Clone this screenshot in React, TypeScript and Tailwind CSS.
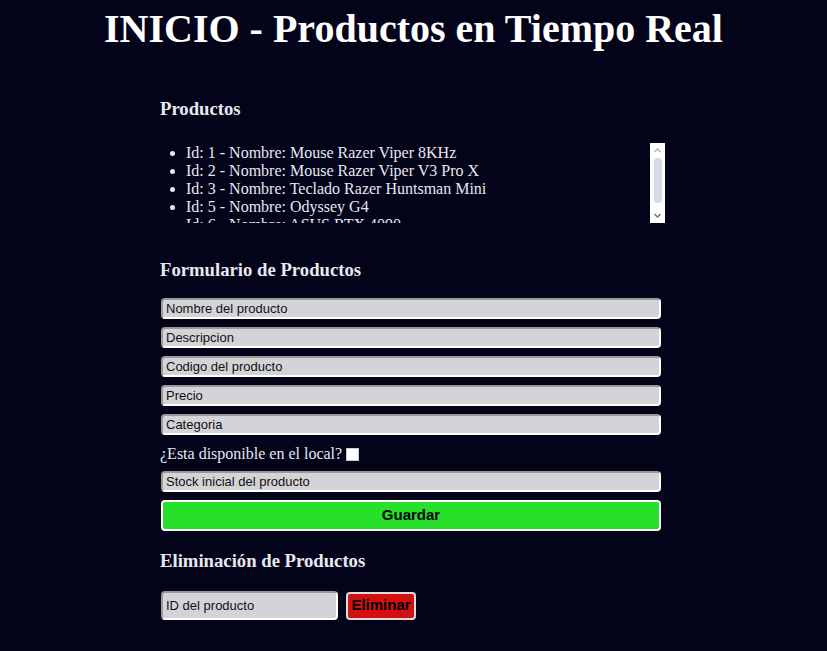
const productos = [
  { id: 1, nombre: "Mouse Razer Viper 8KHz" },
  { id: 2, nombre: "Mouse Razer Viper V3 Pro X" },
  { id: 3, nombre: "Teclado Razer Huntsman Mini" },
  { id: 5, nombre: "Odyssey G4" },
  { id: 6, nombre: "ASUS RTX 4090" },
  { id: 7, nombre: "Monitor LG UltraGear" },
];

const campos = ["Nombre del producto", "Descripcion", "Codigo del producto", "Precio", "Categoria"];

const inputCls =
  "w-full h-[21px] px-[3px] rounded-[4px] bg-[#d4d4d8] border-2 border-t-[#9a9a9a] border-l-[#9a9a9a] border-r-white border-b-white text-[13px] text-black placeholder-[#111] outline-none font-['Liberation_Sans',Arial,sans-serif]";

export default function App() {
  return (
    <div className="min-h-screen bg-[#03031a] text-[#e8e8ee] font-['Liberation_Serif','Times_New_Roman',serif]">
      <h1 className="text-center text-[40px] font-bold text-white leading-none pt-[9px]">
        INICIO - Productos en Tiempo Real
      </h1>

      <div className="w-[507px] mx-auto mt-[49px]">
        {/* Listado */}
        <h3 className="text-[18.7px] font-bold leading-[22px]">Productos</h3>
        <div className="mt-[23px] h-[80px] w-[505px] flex">
          <div className="flex-1 overflow-hidden">
            <ul className="list-disc pl-[26px] text-[16px] leading-[18px] pt-[1px]">
              {productos.map((p) => (
                <li key={p.id}>
                  Id: {p.id} - Nombre: {p.nombre}
                </li>
              ))}
            </ul>
          </div>
          {/* barra de scroll */}
          <div className="w-[15px] bg-white flex flex-col items-center">
            <svg width="9" height="14" viewBox="0 0 9 14" className="shrink-0">
              <path d="M1.5 9 L4.5 6 L7.5 9" fill="none" stroke="#b4b4b4" strokeWidth="1.4" />
            </svg>
            <div className="w-[8px] h-[45px] mt-[1px] rounded-full bg-[#d3dce6]" />
            <div className="flex-1" />
            <svg width="9" height="14" viewBox="0 0 9 14" className="shrink-0">
              <path d="M1.5 5 L4.5 8 L7.5 5" fill="none" stroke="#6e6e6e" strokeWidth="1.4" />
            </svg>
          </div>
        </div>

        {/* Formulario */}
        <h3 className="text-[18.7px] font-bold leading-[22px] mt-[36px]">Formulario de Productos</h3>
        <form className="w-[501px] pl-[1px] mt-[17px] flex flex-col gap-[8px]" onSubmit={(e) => e.preventDefault()}>
          {campos.map((c) => (
            <input key={c} type="text" placeholder={c} className={inputCls} />
          ))}
          <label className="flex items-center gap-[4px] text-[16px] leading-[18px] mt-[2px] -ml-[1px]">
            ¿Esta disponible en el local?
            <input type="checkbox" className="w-[13px] h-[13px] appearance-none bg-white border border-[#ccc]" />
          </label>
          <input type="text" placeholder="Stock inicial del producto" className={inputCls} />
          <button
            type="submit"
            className="h-[31px] rounded-[4px] bg-[#27e02b] border-2 border-white text-black text-[15px] font-bold font-['Liberation_Sans',Arial,sans-serif]"
          >
            Guardar
          </button>
        </form>

        {/* Eliminar */}
        <h3 className="text-[18.7px] font-bold leading-[22px] mt-[19px]">Eliminación de Productos</h3>
        <div className="flex items-center gap-[8px] mt-[19px] pl-[1px]">
          <input type="text" placeholder="ID del producto" className={inputCls + " !w-[177px] !h-[29px]"} />
          <button
            type="button"
            className="h-[28px] w-[70px] rounded-[4px] bg-[#d21010] border-2 border-[#ddd] text-black text-[15px] font-bold font-['Liberation_Sans',Arial,sans-serif]"
          >
            Eliminar
          </button>
        </div>
      </div>
    </div>
  );
}
